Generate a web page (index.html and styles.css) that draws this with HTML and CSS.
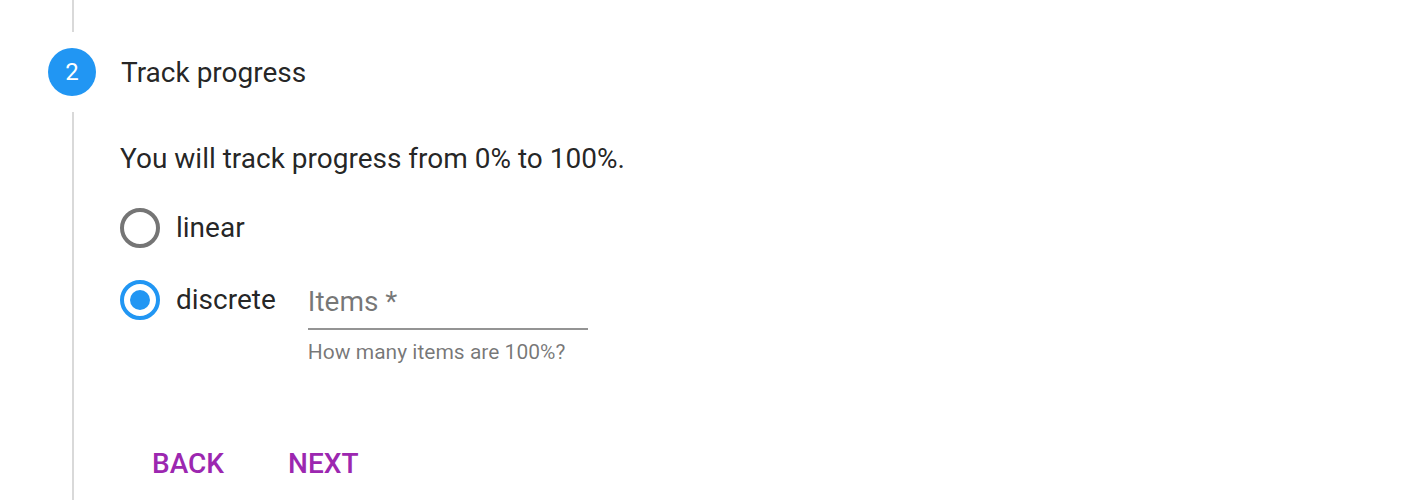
FILE: index.html
```html
<!DOCTYPE html>
<html>
<head>
<meta charset="utf-8">
<link rel="stylesheet" href="styles.css">
</head>
<body>
<div class="stepper">
  <div class="connector"></div>
  <div class="step-header">
    <div class="step-icon">2</div>
    <div class="step-title">Track progress</div>
  </div>
  <div class="step-content">
    <p class="intro">You will track progress from 0% to 100%.</p>
    <div class="radio-group">
      <div class="radio-row">
        <span class="radio"></span>
        <span class="radio-label">linear</span>
      </div>
      <div class="radio-row discrete">
        <span class="radio checked"><span class="dot"></span></span>
        <span class="radio-label">discrete</span>
        <div class="field">
          <div class="field-input">Items *</div>
          <div class="field-helper">How many items are 100%?</div>
        </div>
      </div>
    </div>
    <div class="actions">
      <span class="btn">BACK</span>
      <span class="btn">NEXT</span>
    </div>
  </div>
</div>
</body>
</html>
```
FILE: styles.css
```css
html, body {
  margin: 0;
  padding: 0;
  background: #ffffff;
  font-family: Roboto, "Liberation Sans", sans-serif;
  color: rgba(0, 0, 0, 0.87);
}
.stepper {
  padding-left: 48px;
  height: 500px;
  overflow: hidden;
}
.connector {
  margin-left: 24px;
  width: 2px;
  height: 32px;
  background: #d9d9d9;
}
.step-header {
  display: flex;
  align-items: center;
  padding: 16px 0;
}
.step-icon {
  width: 48px;
  height: 48px;
  border-radius: 50%;
  background: #2196f3;
  color: #fff;
  display: flex;
  align-items: center;
  justify-content: center;
  font-size: 24px;
}
.step-title {
  margin-left: 25px;
  font-size: 28px;
}
.step-content {
  margin-left: 24px;
  border-left: 2px solid #d9d9d9;
  padding-left: 46px;
  padding-top: 1px;
  height: 400px;
}
.intro {
  margin: 28px 0 0;
  font-size: 28px;
  line-height: 36px;
}
.radio-group {
  margin-top: 31px;
  display: flex;
  flex-direction: column;
  gap: 32px;
}
.radio-row {
  display: flex;
  align-items: flex-start;
}
.radio {
  box-sizing: border-box;
  width: 40px;
  height: 40px;
  border-radius: 50%;
  border: 4px solid #757575;
  display: flex;
  align-items: center;
  justify-content: center;
  flex: none;
}
.radio.checked {
  border-color: #2196f3;
}
.dot {
  width: 20px;
  height: 20px;
  border-radius: 50%;
  background: #2196f3;
}
.radio-label {
  margin-left: 16px;
  font-size: 28px;
  line-height: 40px;
}
.field {
  margin-left: 32px;
  width: 280px;
}
.field-input {
  font-size: 28px;
  color: rgba(0, 0, 0, 0.54);
  line-height: 40px;
  padding-top: 2px;
  padding-bottom: 6px;
  border-bottom: 2px solid #949494;
}
.field-helper {
  margin-top: 10px;
  font-size: 21px;
  color: rgba(0, 0, 0, 0.54);
}
.actions {
  margin-top: 83px;
  display: flex;
  gap: 64px;
  padding-left: 32px;
}
.btn {
  color: #9c27b0;
  font-size: 28px;
  font-weight: 500;
}
```
